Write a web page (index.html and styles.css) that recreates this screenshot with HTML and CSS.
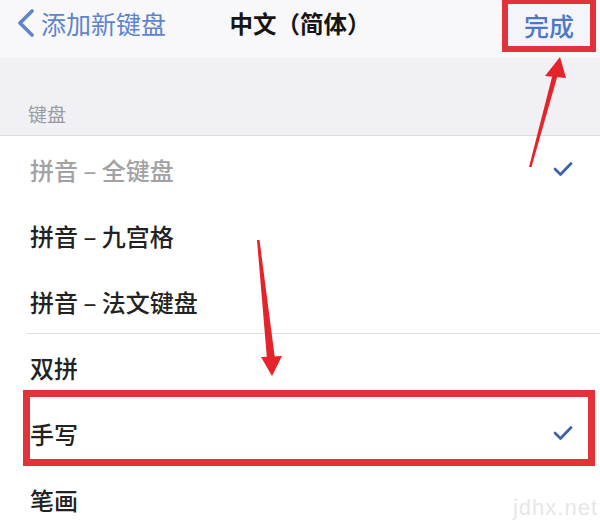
FILE: index.html
```html
<!DOCTYPE html>
<html lang="zh-CN">
<head>
    <meta charset="UTF-8">
    <meta name="viewport" content="width=device-width, initial-scale=1.0">
    <title>中文（简体）</title>
    <link rel="stylesheet" href="styles.css">
</head>
<body>
    <div class="screen">
        <header class="nav-bar">
            <a class="nav-back" href="#">
                <svg class="chevron" width="20" height="28" viewBox="0 0 20 28">
                    <polyline points="16,2 4,14 16,26" fill="none" stroke="currentColor" stroke-width="3.6" stroke-linecap="round" stroke-linejoin="round"/>
                </svg>
                <span>添加新键盘</span>
            </a>
            <h1 class="nav-title">中文（简体）</h1>
            <button class="nav-done" type="button">完成</button>
        </header>

        <div class="section-header">键盘</div>

        <ul class="keyboard-list">
            <li class="keyboard-item is-disabled">
                <span>拼音 – 全键盘</span>
                <svg class="check" width="20" height="16" viewBox="0 0 20 16">
                    <polyline points="2,8 7.5,13.5 18,2.5" fill="none" stroke="currentColor" stroke-width="2.8" stroke-linecap="round" stroke-linejoin="round"/>
                </svg>
            </li>
            <li class="keyboard-item"><span>拼音 – 九宫格</span></li>
            <li class="keyboard-item group-end"><span>拼音 – 法文键盘</span></li>
            <li class="keyboard-item"><span>双拼</span></li>
            <li class="keyboard-item is-marked">
                <span>手写</span>
                <svg class="check" width="20" height="16" viewBox="0 0 20 16">
                    <polyline points="2,8 7.5,13.5 18,2.5" fill="none" stroke="currentColor" stroke-width="2.8" stroke-linecap="round" stroke-linejoin="round"/>
                </svg>
            </li>
            <li class="keyboard-item"><span>笔画</span></li>
        </ul>

        <!-- annotation arrows drawn over the screenshot -->
        <svg class="annotations" width="600" height="522" viewBox="0 0 600 522">
            <polygon points="529,167 531.5,167 558,74 553,73" fill="#e5232a"/>
            <polygon points="560,57 545,76 566,78" fill="#e5232a"/>
            <polygon points="257,240 259.5,240 275,359 267,359" fill="#e5232a"/>
            <polygon points="272,376 261,357 282,356" fill="#e5232a"/>
        </svg>

        <span class="watermark">jdhx.net</span>
    </div>
</body>
</html>
```

FILE: styles.css
```css
:root {
    --ios-blue: #4d78c9;
    --check-blue: #3f62ad;
    --mark-red: #e2323a;
    --text-color: #222222;
    --muted-color: #9b9b9f;
    --group-bg: #f0f0f5;
    --nav-bg: #f8f8fa;
    --line-color: #dcdce1;
}

* {
    margin: 0;
    padding: 0;
    box-sizing: border-box;
}

body {
    font-family: "Noto Sans CJK SC", "Noto Sans", sans-serif;
    color: var(--text-color);
    background-color: #ffffff;
}

.screen {
    position: relative;
    width: 600px;
    height: 522px;
    overflow: hidden;
    background-color: var(--group-bg);
}

/* navigation bar */
.nav-bar {
    display: grid;
    grid-template-columns: 1fr auto 1fr;
    align-items: start;
    height: 58px;
    background-color: var(--nav-bg);
}

.nav-back {
    display: flex;
    align-items: center;
    gap: 5px;
    height: 46px;
    padding-left: 16px;
    color: var(--ios-blue);
    font-size: 25px;
    text-decoration: none;
    opacity: 0.9;
}

.chevron {
    flex-shrink: 0;
}

.nav-title {
    height: 46px;
    line-height: 46px;
    font-size: 23.5px;
    font-weight: 700;
    color: #151515;
}

.nav-done {
    justify-self: end;
    width: 94px;
    height: 54px;
    margin-top: -2px;
    margin-right: 4px;
    border: 6px solid var(--mark-red);
    background-color: #f4f5fa;
    color: var(--ios-blue);
    font-family: inherit;
    font-size: 25px;
    font-weight: 500;
    cursor: pointer;
}

/* section header */
.section-header {
    display: flex;
    align-items: flex-end;
    height: 78px;
    padding: 0 28px 10px;
    font-size: 19px;
    line-height: 22px;
    color: var(--muted-color);
    border-bottom: 1px solid var(--line-color);
}

/* keyboard list */
.keyboard-list {
    list-style: none;
    background-color: #ffffff;
}

.keyboard-item {
    position: relative;
    display: flex;
    align-items: center;
    justify-content: space-between;
    height: 66px;
    padding: 0 27px 0 30px;
    font-size: 24px;
    font-weight: 500;
}

.keyboard-item.is-disabled {
    color: #a2a2a4;
}

.keyboard-item.group-end::after {
    content: "";
    position: absolute;
    left: 27px;
    right: 0;
    bottom: 0;
    border-bottom: 1px solid var(--line-color);
}

.keyboard-item.is-marked::before {
    content: "";
    position: absolute;
    left: 23px;
    right: 5px;
    top: -10px;
    bottom: 0;
    border: 7px solid var(--mark-red);
}

.check {
    color: var(--check-blue);
}

/* overlays */
.annotations {
    position: absolute;
    top: 0;
    left: 0;
    pointer-events: none;
}

.watermark {
    position: absolute;
    right: 2px;
    bottom: 1px;
    font-family: "Liberation Sans", sans-serif;
    font-size: 22px;
    letter-spacing: 1px;
    color: #e6e6e8;
}
```
